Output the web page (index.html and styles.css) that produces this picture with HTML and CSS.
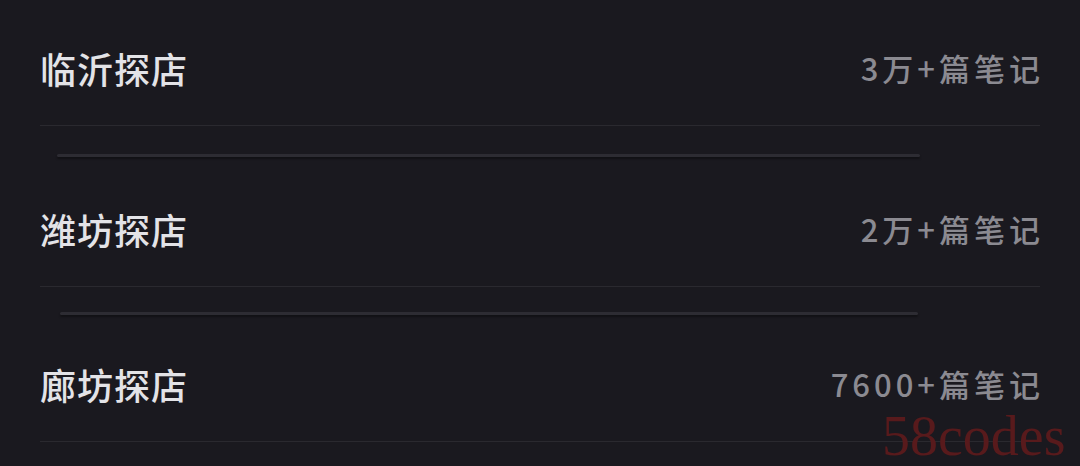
FILE: index.html
```html
<!DOCTYPE html>
<html lang="zh-CN">
<head>
  <meta charset="UTF-8" />
  <title>探店</title>
  <link rel="stylesheet" href="styles.css">
</head>
<body>
  <main class="lista">
    <div class="fila primera">
      <span class="titulo">临沂探店</span>
      <span class="cuenta">3万+篇笔记</span>
    </div>
    <div class="linea"></div>
    <div class="barra"></div>

    <div class="fila">
      <span class="titulo">潍坊探店</span>
      <span class="cuenta">2万+篇笔记</span>
    </div>
    <div class="linea"></div>
    <div class="barra corta"></div>

    <div class="fila">
      <span class="titulo">廊坊探店</span>
      <span class="cuenta">7600+篇笔记</span>
    </div>
    <div class="linea"></div>
  </main>
  <div class="marca">58codes</div>
</body>
</html>
```

FILE: styles.css
```css
body {
  font-family: "Noto Sans CJK SC", "Noto Sans", sans-serif;
  background-color: #1a191f;
  margin: 0;
  padding: 0;
  height: 466px;
  overflow: hidden;
  position: relative;
}
.lista {
  padding: 0 40px;
}
.fila {
  box-sizing: border-box;
  height: 110px;
  padding-bottom: 5px;
  display: flex;
  align-items: center;
  justify-content: space-between;
}
.fila.primera {
  height: 125px;
  padding: 10px 0 0;
}
.titulo {
  font-size: 36px;
  font-weight: 500;
  color: #e3e3e7;
  letter-spacing: 1px;
}
.cuenta {
  font-size: 31px;
  font-weight: 500;
  color: #8b8a91;
  letter-spacing: 4px;
  margin-right: -4px;
}
.linea {
  height: 1px;
  background-color: #2a292f;
}
.barra {
  height: 3px;
  margin: 28px 120px 19px 17px;
  background-color: #2d2c33;
  border-radius: 2px;
  box-shadow: 0 2px 2px rgba(0,0,0,0.35);
}
.barra.corta {
  margin: 25px 122px 16px 20px;
}
.marca {
  position: absolute;
  left: 882px;
  top: 408px;
  font-family: "Liberation Serif", serif;
  font-size: 56px;
  line-height: 1;
  color: #581a1c;
}
```
